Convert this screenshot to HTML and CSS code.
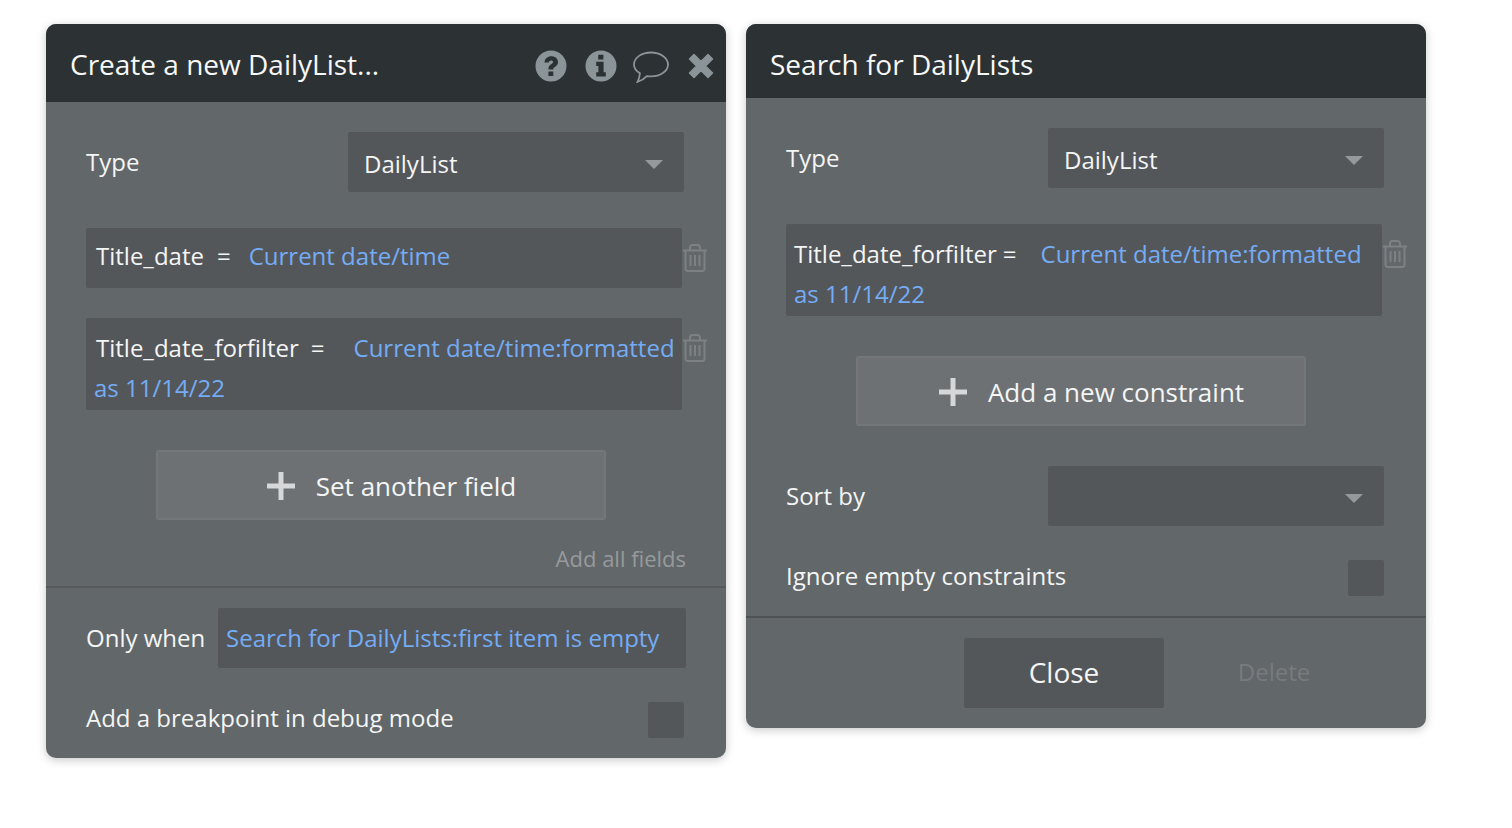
FILE: index.html
```html
<!DOCTYPE html>
<html lang="en">
<head>
    <meta charset="UTF-8">
    <title>DailyList editors</title>
    <link rel="stylesheet" href="styles.css">
</head>
<body>
    <svg class="icon-defs" width="0" height="0">
        <symbol id="trash" viewBox="0 0 26 28">
            <path d="M1 6.500h24M3.500 7v17.500a2.500 2.500 0 0 0 2.500 2.500h14a2.500 2.500 0 0 0 2.500-2.500V7M8 6V3.500A2.500 2.500 0 0 1 10.500 1h5A2.500 2.500 0 0 1 18 3.500V6M8.500 11v11M13 11v11M17.500 11v11" fill="none" stroke="currentColor" stroke-width="2"/>
        </symbol>
        <symbol id="plus" viewBox="0 0 28 28">
            <path d="M11.500 0h5v11.500H28v5H16.500V28h-5V16.500H0v-5h11.500z" fill="currentColor"/>
        </symbol>
    </svg>

    <div class="panel panel-left">
        <div class="panel-head">
            <span class="panel-title">Create a new DailyList...</span>
            <div class="head-icons">
                <svg class="head-icon" viewBox="0 0 32 32" width="32" height="32">
                    <circle cx="16" cy="16" r="15.500" fill="#8b9498"/>
                    <path d="M9.500 12.500C9.800 8.600 12.600 6.300 16.300 6.300c3.800 0 6.700 2.300 6.700 5.700 0 2.600-1.400 3.900-3.100 5-1.200.8-1.600 1.300-1.600 2.500h-4.900c0-2.700.8-4 2.700-5.200 1.300-.8 2-1.400 2-2.200 0-1-.8-1.700-2-1.700-1.300 0-2.100.8-2.300 2.200zM13.400 21.500h4.900v4.500h-4.900z" fill="#2c3134"/>
                </svg>
                <svg class="head-icon" viewBox="0 0 32 32" width="32" height="32">
                    <circle cx="16" cy="16" r="15.500" fill="#8b9498"/>
                    <path d="M13.200 4.800h5.200v4.600h-5.200zM11.200 11.800h7.400v10.400h2.200v4.300H11.200v-4.300h2.200v-6.100h-2.200z" fill="#2c3134"/>
                </svg>
                <svg class="head-icon head-comment" viewBox="0 0 36 32" width="36" height="32">
                    <path d="M18 1.500C8.900 1.500 1 6.500 1 13.500c0 3.500 2.300 6.600 5.900 8.700-.2 2.800-1 6-2.400 8.800 3.600-1.200 7-3.400 9.300-5.900 1.300.2 2.700.3 4.200.3 9.100 0 17-5 17-11.900S27.100 1.500 18 1.500z" fill="none" stroke="#8b9498" stroke-width="1.800"/>
                </svg>
                <svg class="head-icon" viewBox="0 0 26 26" width="26" height="26">
                    <path d="M6 1.500 13 8.500l7-7 4.500 4.500-7 7 7 7-4.500 4.500-7-7-7 7L1.500 20l7-7-7-7z" fill="#8b9498" stroke="#8b9498" stroke-width="1.500" stroke-linejoin="round"/>
                </svg>
            </div>
        </div>
        <div class="panel-body">
            <div class="row type-row">
                <span class="label">Type</span>
                <div class="dropdown">DailyList<i class="caret"></i></div>
            </div>
            <div class="field-row field-short">
                <div class="field"><span class="field-name">Title_date</span><span class="eq">=</span><span class="dyn">Current date/time</span></div>
                <svg class="trash"><use href="#trash"/></svg>
            </div>
            <div class="field-row field-tall field-left">
                <div class="field"><span class="field-name">Title_date_forfilter</span><span class="eq eq-wide">=</span><span class="dyn">Current date/time:formatted</span><br><span class="dyn">as 11/14/22</span></div>
                <svg class="trash"><use href="#trash"/></svg>
            </div>
            <div class="add-btn add-field"><svg class="plus"><use href="#plus"/></svg>Set another field</div>
            <div class="add-all">Add all fields</div>
        </div>
        <div class="panel-foot">
            <div class="row when-row">
                <span class="label">Only when</span>
                <div class="when-input">Search for DailyLists:first item is empty</div>
            </div>
            <div class="row check-row">
                <span class="label">Add a breakpoint in debug mode</span>
                <i class="checkbox"></i>
            </div>
        </div>
    </div>

    <div class="panel panel-right">
        <div class="panel-head head-short">
            <span class="panel-title">Search for DailyLists</span>
        </div>
        <div class="panel-body">
            <div class="row type-row">
                <span class="label">Type</span>
                <div class="dropdown">DailyList<i class="caret"></i></div>
            </div>
            <div class="field-row field-tall field-right">
                <div class="field"><span class="field-name">Title_date_forfilter</span><span class="eq eq-tight">=</span><span class="dyn">Current date/time:formatted</span><br><span class="dyn">as 11/14/22</span></div>
                <svg class="trash"><use href="#trash"/></svg>
            </div>
            <div class="add-btn add-constraint"><svg class="plus"><use href="#plus"/></svg>Add a new constraint</div>
            <div class="row sort-row">
                <span class="label">Sort by</span>
                <div class="dropdown"><i class="caret"></i></div>
            </div>
            <div class="row check-row ignore-row">
                <span class="label">Ignore empty constraints</span>
                <i class="checkbox"></i>
            </div>
        </div>
        <div class="panel-actions">
            <div class="btn-close">Close</div>
            <div class="btn-delete">Delete</div>
        </div>
    </div>
</body>
</html>
```

FILE: styles.css
```css
body {
    margin: 0;
    padding: 24px 46px;
    background: #fff;
    display: flex;
    align-items: flex-start;
    gap: 20px;
    font-family: "Open Sans", sans-serif;
    font-size: 24px;
    color: #f4f5f5;
}
.icon-defs {
    position: absolute;
}
.panel {
    width: 680px;
    background: #62676a;
    border-radius: 10px;
    box-shadow: 0 2px 10px rgba(0, 0, 0, 0.22);
    overflow: hidden;
}
.panel-left {
    height: 734px;
}
.panel-right {
    height: 704px;
}
.panel-head {
    height: 78px;
    box-sizing: border-box;
    background: #2c3134;
    padding: 2px 12px 0 24px;
    display: flex;
    align-items: center;
    justify-content: space-between;
}
.head-short {
    height: 74px;
    padding-top: 6px;
}
.panel-title {
    font-size: 28px;
    color: #f7f8f8;
}
.head-icons {
    display: flex;
    align-items: center;
    gap: 18px;
    padding-top: 4px;
}
.head-comment {
    margin: 2px 1px 0 -2px;
}
.panel-body {
    padding: 30px 40px 0;
}
.row {
    display: flex;
    align-items: center;
    justify-content: space-between;
}
.label {
    line-height: 32px;
}
.type-row {
    height: 60px;
    margin-right: 2px;
}
.dropdown {
    width: 336px;
    height: 60px;
    box-sizing: border-box;
    padding: 4px 0 0 16px;
    background: #54575a;
    border-radius: 2px;
    display: flex;
    align-items: center;
    line-height: 32px;
}
.caret {
    width: 0;
    height: 0;
    margin: 0 21px 0 auto;
    border-left: 9px solid transparent;
    border-right: 9px solid transparent;
    border-top: 9px solid #96999b;
}
.field-row {
    display: flex;
    align-items: flex-start;
    margin-top: 36px;
}
.field {
    width: 596px;
    box-sizing: border-box;
    background: #54575a;
    border-radius: 2px;
    line-height: 40px;
    flex-shrink: 0;
    white-space: nowrap;
}
.field-short .field {
    height: 60px;
    padding: 8px 10px;
}
.field-tall {
    margin-top: 30px;
}
.field-tall .field {
    height: 92px;
    padding: 10px 8px;
}
.field-name {
    margin-left: 2px;
}
.field-short .field-name {
    margin-left: 0;
}
.field-right {
    margin-top: 36px;
}
.field-right .field-name {
    margin-left: 0;
}
.eq {
    margin: 0 18px 0 13px;
}
.eq-wide {
    margin: 0 29px 0 12px;
}
.eq-tight {
    margin: 0 24px 0 6px;
}
.dyn {
    color: #74acf5;
}
.trash {
    width: 26px;
    height: 28px;
    flex-shrink: 0;
    margin-top: 16px;
    color: #7d8184;
}
.add-btn {
    width: 450px;
    height: 70px;
    box-sizing: border-box;
    margin: 40px 0 0 70px;
    padding: 2px 0 0 21px;
    display: flex;
    align-items: center;
    justify-content: center;
    gap: 21px;
    background: #6d7174;
    border: 2px solid #73777a;
    border-radius: 3px;
    font-size: 26px;
}
.plus {
    width: 28px;
    height: 28px;
    color: #d6d7d8;
}
.add-all {
    margin: 23px 0 0;
    text-align: right;
    font-size: 22px;
    color: #979a9c;
    line-height: 30px;
}
.panel-foot {
    margin-top: 13px;
    border-top: 2px solid #565a5d;
    padding: 20px 40px 0;
}
.when-row {
    height: 60px;
}
.when-input {
    width: 468px;
    height: 60px;
    box-sizing: border-box;
    padding-left: 8px;
    background: #54575a;
    border-radius: 2px;
    color: #74acf5;
    line-height: 60px;
}
.check-row {
    height: 36px;
    margin: 34px 2px 0 0;
}
.check-row .label {
    margin-top: -4px;
}
.checkbox {
    width: 36px;
    height: 36px;
    background: #54575a;
    border-radius: 2px;
}
.sort-row {
    margin: 40px 2px 0 0;
    height: 60px;
}
.ignore-row {
    margin-top: 34px;
}
.panel-actions {
    margin-top: 20px;
    padding: 20px 0 0 218px;
    border-top: 2px solid #4f5255;
    display: flex;
    align-items: center;
}
.btn-close {
    width: 200px;
    height: 70px;
    background: #54575a;
    border-radius: 2px;
    text-align: center;
    line-height: 68px;
    font-size: 28px;
}
.btn-delete {
    width: 220px;
    padding-bottom: 4px;
    text-align: center;
    color: #777b7e;
}
```
